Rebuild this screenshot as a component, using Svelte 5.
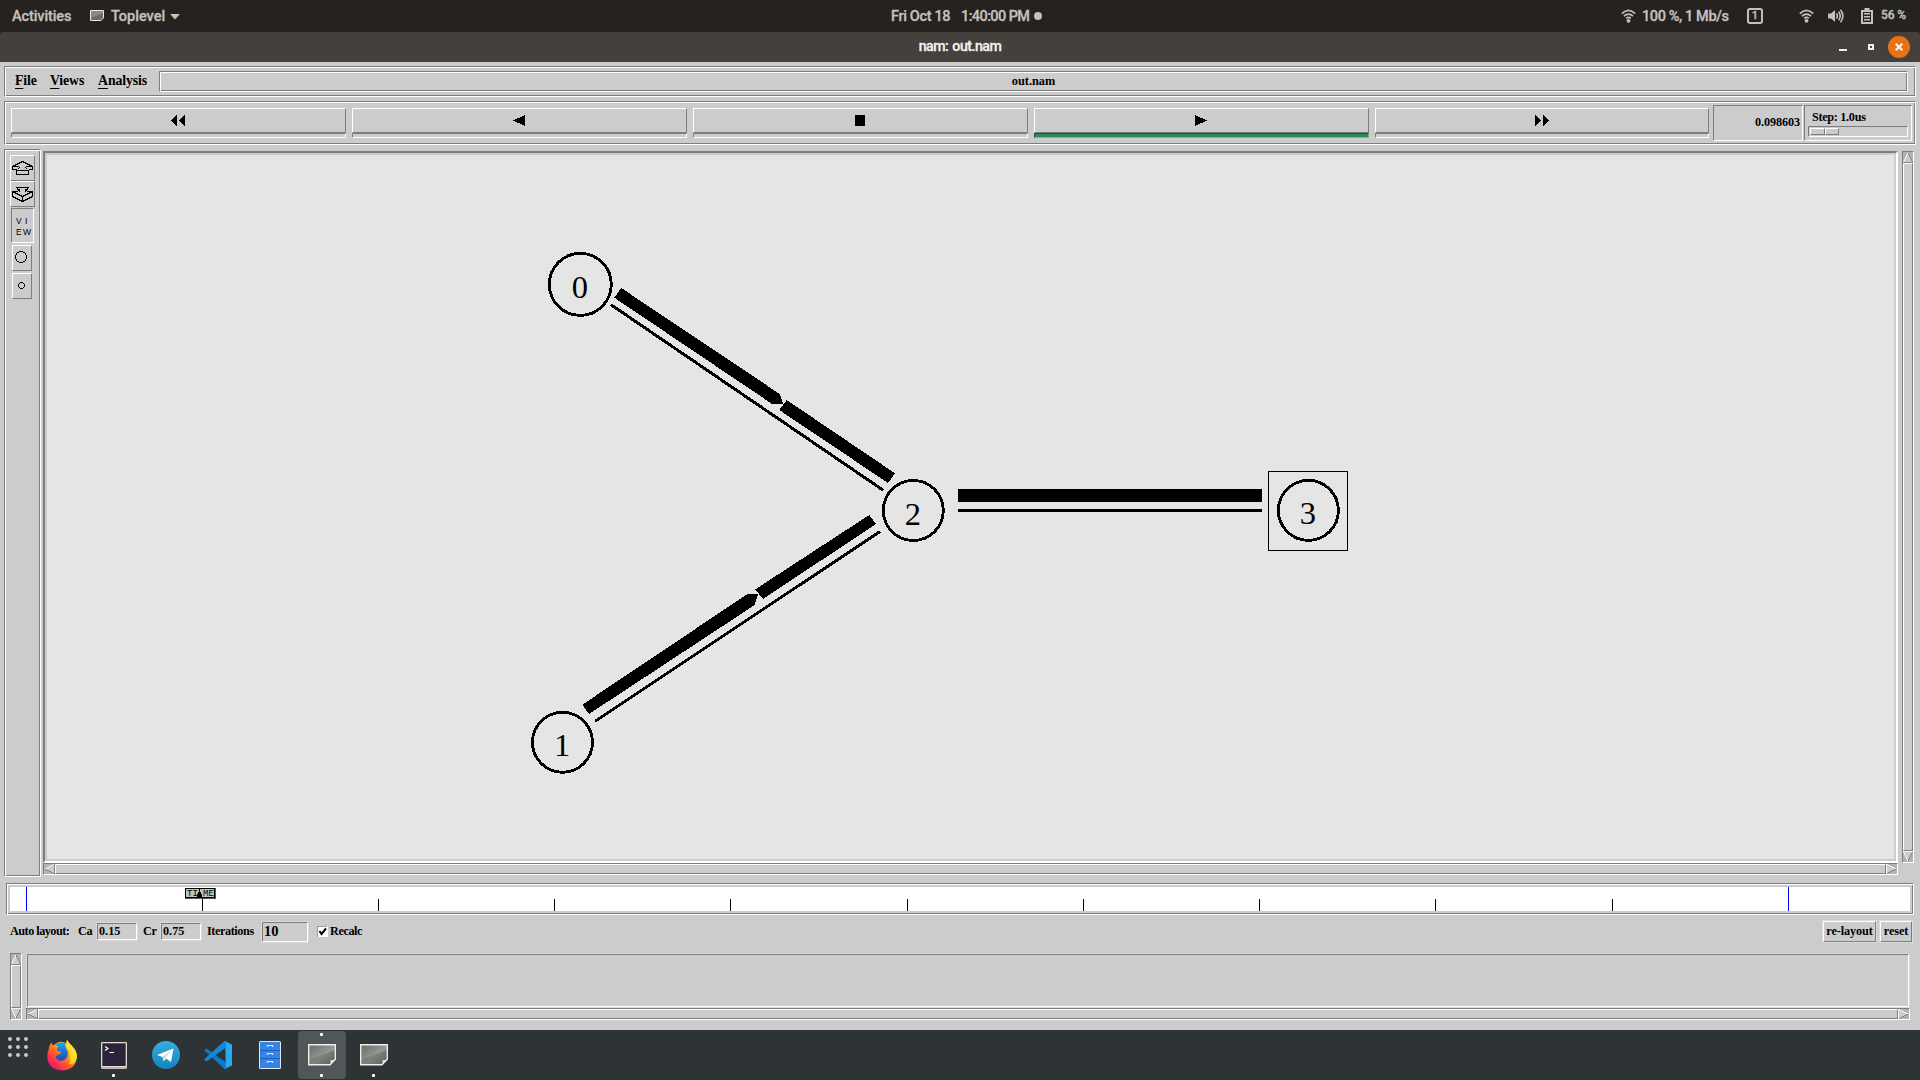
<script>
  const playback = ['rewind', 'back', 'stop', 'play', 'forward'];
  const glyphs = {
    rewind: 'M6 0v11L0 5.5zM14 0v11L8 5.5z',
    back: 'M13 0v11L1 5.5z',
    stop: 'M2 0h10v11H2z',
    play: 'M1 0v11L13 5.5z',
    forward: 'M0 0v11L6 5.5zM8 0v11l6-5.5z'
  };
  const nodes = [
    { id: 0, x: 580.3, y: 284.4, r: 31 },
    { id: 1, x: 562.5, y: 742.3, r: 30 },
    { id: 2, x: 913.3, y: 510.5, r: 30 },
    { id: 3, x: 1308.4, y: 510.4, r: 30 }
  ];
  const packets = [
    '621.3,288 614.3,297.7 771.7,403.7 783.2,403.7 779.7,394',
    '786.7,400 779.3,410 888,483 895,473.3',
    '582.3,704.7 589,714 754.7,605 758.2,594.2 747.5,594',
    '755.3,589.3 763,599 876,524 869.3,515',
    '958,489 1262,489 1262,502 958,502'
  ];
  const wires = [
    [610.8, 304.6, 883.2, 490.2],
    [595.2, 721.2, 880, 531.4],
    [958, 510.5, 1262, 510.5]
  ];
  const ticks = [1, 2, 3, 4, 5, 6, 7, 8, 9].map((k) => Math.floor(16 + 176.23 * k));
</script>

{#snippet arrow(dir)}
  <svg class="arrow" width="11" height="11" viewBox="0 0 11 11" shape-rendering="crispEdges">
    <rect width="11" height="11" fill="#b3b3b3" />
    {#if dir === 'up'}
      <path d="M5.5 .5L.5 10.5H10.5z" fill="#ccc" /><path d="M.5 10.5L5.5 .5" stroke="#fff" /><path d="M5.5 .5L10.5 10.5H.5" fill="none" stroke="#7d7d7d" />
    {:else if dir === 'down'}
      <path d="M.5 .5H10.5L5.5 10.5z" fill="#ccc" /><path d="M5.5 10.5L.5 .5H10.5" fill="none" stroke="#fff" /><path d="M10.5 .5L5.5 10.5" stroke="#7d7d7d" />
    {:else if dir === 'left'}
      <path d="M10.5 .5L.5 5.5L10.5 10.5z" fill="#ccc" /><path d="M.5 5.5L10.5 .5" stroke="#fff" /><path d="M10.5 .5V10.5L.5 5.5" fill="none" stroke="#7d7d7d" />
    {:else}
      <path d="M.5 .5V10.5L10.5 5.5z" fill="#ccc" /><path d="M.5 10.5V.5L10.5 5.5" fill="none" stroke="#fff" /><path d="M10.5 5.5L.5 10.5" stroke="#7d7d7d" />
    {/if}
  </svg>
{/snippet}

{#snippet wifi()}
  <svg width="15" height="14" viewBox="0 0 15 14" fill="none" stroke="#c2c1bf" stroke-width="1.7">
    <path d="M.8 4.7Q7.5-1.8 14.2 4.7M3 7.2q4.5-4.3 9 0M5.2 9.4q2.3-2.1 4.6 0" /><circle cx="7.5" cy="11.8" r="1.9" fill="#c2c1bf" stroke="none" />
  </svg>
{/snippet}

{#snippet windowIcon()}
  <svg width="28" height="22" viewBox="0 0 28 22">
    <defs><linearGradient id="sheet" x1="0" y1="0" x2="1" y2="1"><stop offset="0" stop-color="#686a65" /><stop offset=".55" stop-color="#969893" /><stop offset="1" stop-color="#5c5e5a" /></linearGradient></defs>
    <path d="M.7.7H27.3V15.2L22 20.8H.7z" fill="url(#sheet)" stroke="#eeeeec" stroke-width="1.4" />
    <path d="M1.5 16L26.5 6V15L22 20H1.5z" fill="#555753" opacity=".35" />
    <path d="M27.3 15.2q-2.3 1.5-4.8 1 .8 2.4-.5 4.6z" fill="#eeeeec" />
  </svg>
{/snippet}

<div class="screen">
  <header class="topbar">
    <span class="activities">Activities</span>
    <svg class="app-icon" width="14" height="11" viewBox="0 0 14 11"><path d="M.5.5h13V8L11 10.5H.5z" fill="#888a85" stroke="#e8e8e6" /><path d="M1 8l12-5v5l-2 2H1z" fill="#6b6d69" /></svg>
    <span class="app">Toplevel</span>
    <svg class="caret" width="10" height="6" viewBox="0 0 10 6"><path d="M0 0h10L5 5.5z" fill="#c2c1bf" /></svg>
    <div class="clock"><span class="date">Fri Oct 18</span><span class="time">1:40:00 PM</span><i></i></div>
    <div class="status">
      {@render wifi()}
      <span class="net">100 %, 1 Mb/s</span>
      <span class="workspace">1</span>
      {@render wifi()}
      <svg class="volume" width="16" height="14" viewBox="0 0 16 14" fill="none" stroke="#c2c1bf" stroke-width="1.6"><path d="M0 4.5h3L7 1v12L3 9.500H0z" fill="#c2c1bf" stroke="none" /><path d="M8.500 4.500q1.700 2.500 0 5M10.600 2.700q3.200 4.300 0 8.600M12.500 .8q4.800 6.200 0 12.400" /></svg>
      <svg class="battery" width="12" height="16" viewBox="0 0 12 16"><path d="M3.500 0h5v2H12v14H0V2h3.500z" fill="#c2c1bf" /><path d="M2 4h8v10H2z" fill="#262220" /><path d="M3 5h6v1.600H3zM3 8h6v1.600H3zM3 11h6v1.600H3z" fill="#c2c1bf" /></svg>
      <span class="percent">56 %</span>
    </div>
  </header>
  <div class="titlebar">
    <span class="spacer"></span>
    <span class="title">nam: out.nam</span>
    <div class="controls">
      <svg width="8" height="2"><rect width="8" height="2" fill="#f2f1f0" /></svg>
      <svg width="6" height="6"><path d="M0 0h6v6H0zM2 2v2h2V2z" fill="#f2f1f0" fill-rule="evenodd" /></svg>
      <svg width="22" height="22"><circle cx="11" cy="11" r="11" fill="#e97313" /><path d="M7.700 7.700l6.600 6.600m0-6.600l-6.600 6.600" stroke="#f5f0ec" stroke-width="2.300" /></svg>
    </div>
  </div>

  <main class="window">
    <nav class="menubar groove">
      <span class="file"><u>F</u>ile</span><span class="views"><u>V</u>iews</span><span class="analysis"><u>A</u>nalysis</span>
      <div class="filename groove">out.nam</div>
    </nav>
    <section class="toolbar groove">
      {#each playback as name}
        <div class="play" class:running={name === 'play'}>
          <button aria-label={name}><svg width="14" height="11" shape-rendering="crispEdges"><path d={glyphs[name]} /></svg></button>
          <div class="strip"></div>
        </div>
      {/each}
      <div class="now sunken">0.098603</div>
      <div class="step sunken">
        <span>Step: 1.0us</span>
        <div class="slider"><div class="knob"><i></i><i></i></div></div>
      </div>
    </section>

    <section class="work">
      <aside class="side groove">
        <div class="tool"><svg width="21" height="14" viewBox="0 0 21 14" shape-rendering="crispEdges" fill="none" stroke="#000"><path d="M4.500 8.500H.5V5.500L10.500 .5L20.500 5.500V8.500H16.500M.5 5.500H6.500M20.500 5.500H14.500M6.500 5.500L7.500 6.500L5.500 8.500M14.500 5.500L13.500 6.500L15.500 8.500M4.500 9.500H16.500V13.500H4.500z" /></svg></div>
        <div class="tool"><svg width="21" height="15" viewBox="0 0 21 15" shape-rendering="crispEdges" fill="none" stroke="#000"><path d="M4.500 .5H16.500L14.500 3.500L15.500 4.500H20.500L10.500 9.500L.5 4.500H5.500L6.500 3.500zM.5 4.500V9.500L10.500 14.500L20.500 9.500V4.500M10.500 9.500V14.500M5.500 2.500H7.500V4.500M15.500 2.500H13.500V4.500" /></svg></div>
        <div class="tool view sunken">
          <svg width="17" height="20"><text class="pixel" x="0" y="7">V</text><text class="pixel" x="9" y="7">I</text><text class="pixel" x="0" y="18">E</text><text class="pixel" x="7" y="18">W</text></svg>
        </div>
        <div class="tool round"><svg width="12" height="12" shape-rendering="crispEdges"><circle cx="6" cy="6" r="5.500" fill="none" stroke="#000" /></svg></div>
        <div class="tool round small"><svg width="7" height="7" shape-rendering="crispEdges"><path d="M2 .5H5M2 6.500H5M.5 2V5M6.500 2V5M1 1.500H2M5 1.500H6M1 5.500H2M5 5.500H6" stroke="#000" /></svg></div>
      </aside>
      <div class="stage">
        <div class="canvas">
          <svg width="1847" height="704" viewBox="47 155 1847 704">
            <g shape-rendering="crispEdges">
              {#each packets as points}<polygon {points} />{/each}
              {#each wires as [x1, y1, x2, y2]}<line {x1} {y1} {x2} {y2} stroke="#000" stroke-width="3" />{/each}
              {#each nodes as n}<circle cx={n.x} cy={n.y} r={n.r} fill="none" stroke="#000" stroke-width="2.900" />{/each}
              <rect x="1268.500" y="471.500" width="79" height="79" fill="none" stroke="#000" />
            </g>
            {#each nodes as n}<text class="node" x={n.x - 0.5} y={n.y + 14}>{n.id}</text>{/each}
          </svg>
        </div>
        <div class="hbar">{@render arrow('left')}<div class="thumb"></div>{@render arrow('right')}</div>
      </div>
      <div class="vbar">{@render arrow('up')}<div class="thumb"></div>{@render arrow('down')}</div>
    </section>

    <section class="timeline groove">
      <svg width="1900" height="24">
        <g shape-rendering="crispEdges">
          <rect width="1900" height="24" fill="#fff" />
          <path d="M16.500 0V24M1778.500 0V24" stroke="#00f" />
          {#each ticks as x}<rect {x} y="12" width="1" height="12" />{/each}
          <rect x="175" y="1" width="31" height="11" fill="#555" />
          <rect x="175.500" y="1.500" width="29" height="9" fill="#bfc2b8" stroke="#000" />
          <path d="M189 2h1v3h1v2h1v4h-5V7h1V5h1z" />
        </g>
        <text class="marker" x="177" y="9.200">TI</text><text class="marker" x="193" y="9.200">ME</text>
      </svg>
    </section>

    <section class="layout">
      <span class="label auto">Auto layout:</span><span class="label ca">Ca</span><div class="entry">0.15</div>
      <span class="label cr">Cr</span><div class="entry">0.75</div>
      <span class="label iter">Iterations</span><div class="entry big">10</div>
      <svg class="check" width="11" height="11"><rect width="11" height="11" fill="#fff" /><path d="M0 11V0h10" fill="none" stroke="#7d7d7d" stroke-width="1.500" /><path d="M2.500 5l2 3L9 2.500" fill="none" stroke="#000" stroke-width="2" /></svg>
      <span class="label recalc">Recalc</span>
      <span class="grow"></span>
      <button class="relayout">re-layout</button><button class="reset">reset</button>
    </section>

    <section class="log">
      <div class="vbar">{@render arrow('up')}<div class="thumb"></div>{@render arrow('down')}</div>
      <div class="log-main">
        <div class="log-text"></div>
        <div class="hbar">{@render arrow('left')}<div class="thumb"></div>{@render arrow('right')}</div>
      </div>
    </section>
  </main>

  <footer class="dock">
    <svg class="apps" width="20" height="20" fill="#c6c8c8">
      {#each [2, 10, 18] as y}{#each [2, 10, 18] as x}<circle cx={x} cy={y} r="2" />{/each}{/each}
    </svg>
    <div class="launcher first">
      <svg width="30" height="31" viewBox="0 0 30 31">
        <defs>
          <linearGradient id="fox" x1=".9" y1=".1" x2=".2" y2=".9"><stop offset="0" stop-color="#fff13d" /><stop offset=".35" stop-color="#ffb41c" /><stop offset=".65" stop-color="#ff5a2b" /><stop offset="1" stop-color="#f5156c" /></linearGradient>
          <linearGradient id="globe" x1="0" y1="0" x2="0" y2="1"><stop offset="0" stop-color="#12a5f4" /><stop offset="1" stop-color="#2746b8" /></linearGradient>
        </defs>
        <path d="M1.500 10Q2 5 4.500 2.500Q5 4.500 6.500 5.500Q13-1 20 4Q19 2 20 0Q22 3.500 25 6Q30 11 30 17Q28.500 30 15 30.500Q1 29.500 .3 17Q.3 12.500 1.500 10z" fill="url(#fox)" />
        <path d="M8 5Q13 .5 18.500 3.500Q17.500 6 19.500 9Q22 13 20 17Q16.500 22.500 11 20Q7.500 17.500 9.500 15.500Q12.500 15 14.500 12L10.500 11Q9 8.500 11.500 6.500Q10 5 8 5z" fill="url(#globe)" />
        <path d="M20 0Q22 3.500 25 6Q30 11 30 17Q28 25 22 24Q25 17 22.500 11Q17.500 5 20 0z" fill="#ffe52e" opacity=".8" />
      </svg>
    </div>
    <div class="launcher">
      <svg width="26" height="27"><rect width="26" height="27" rx="1.500" fill="#bdb8b0" /><rect y="0" width="26" height="25" rx="1.500" fill="#dedbd6" /><rect x="1.300" y="1.300" width="23.400" height="22.700" fill="#2b2438" /><path d="M4 4.500l3 2-3 2M8.500 10.500H13" fill="none" stroke="#fff" stroke-width="1.200" /></svg><i class="dot"></i>
    </div>
    <div class="launcher">
      <svg width="28" height="28"><defs><linearGradient id="tg" x1="0" y1="0" x2="0" y2="1"><stop offset="0" stop-color="#37aee2" /><stop offset="1" stop-color="#1482bd" /></linearGradient></defs><circle cx="14" cy="14" r="14" fill="url(#tg)" /><path d="M5 14L21.500 7.500L19 21L14 17.500L11.500 20.500L10.500 16z" fill="#fff" /><path d="M10.500 16L20 9l-7.500 8.200-1 3.300z" fill="#bcd5e5" /></svg>
    </div>
    <div class="launcher">
      <svg width="28" height="28"><path d="M0 9L2.500 7.500L21.500 21V28L20.500 28z" fill="#0b7cc4" /><path d="M0 18.500L2.500 20.500L21.500 7V0H20.500z" fill="#0f88d5" /><path d="M20.500 0L28 3.500V24.500L20.500 28L21.500 26V2z" fill="#29a9f1" /></svg>
    </div>
    <div class="launcher">
      <svg width="22" height="28"><rect width="22" height="28" rx="1.500" fill="#dbe9fa" /><rect x="1" y="1" width="20" height="26" fill="#3584e4" /><path d="M1 9.500H21M1 17.500H21" stroke="#1c62bd" /><path d="M8.500 6V4.500h5V6M8.500 14v-1.500h5V14M8.500 22v-1.500h5V22" fill="none" stroke="#e0e4e8" stroke-width="1.200" /></svg>
    </div>
    <div class="launcher active"><i class="dot top"></i>{@render windowIcon()}<i class="dot"></i></div>
    <div class="launcher">{@render windowIcon()}<i class="dot"></i></div>
  </footer>
</div>

<style>
  :global(body) { margin: 0; overflow: hidden; }
  * { box-sizing: border-box; }
  svg { display: block; flex: none; }
  .screen { width: 1920px; height: 1080px; display: flex; flex-direction: column; background: #262220; font-family: Roboto, 'Open Sans', sans-serif; font-weight: 500; white-space: nowrap; }
  .topbar, .title { -webkit-text-stroke: .3px; }
  .topbar { height: 32px; flex: none; display: flex; align-items: center; padding-left: 12px; color: #c2c1bf; font-size: 14.500px; }
  .activities { width: 78px; letter-spacing: -.1px; }
  .app { margin-left: 7px; width: 59px; }
  .app-icon { margin-top: -1px; }
  .caret { margin-top: 1px; }
  .clock { margin-left: 711px; display: flex; align-items: center; }
  .date { width: 70px; letter-spacing: -.35px; }
  .time { width: 73px; letter-spacing: -.6px; }
  .clock i { width: 8px; height: 8px; border-radius: 50%; background: #c2c1bf; }
  .status { margin-left: auto; display: flex; align-items: center; width: 299px; }
  .net { width: 105px; margin-left: 6px; letter-spacing: -.4px; }
  .workspace { width: 16px; height: 16px; border: 2px solid #c2c1bf; border-radius: 3px; font-size: 11px; line-height: 12px; text-align: center; margin-right: 36px; }
  .volume { margin-left: 14px; }
  .battery { margin-left: 17px; }
  .percent { font-size: 12px; margin: -2px 0 0 8px; letter-spacing: -.1px; }

  .titlebar { height: 30px; flex: none; display: flex; align-items: center; background: #45403c; border-radius: 4px 4px 0 0; color: #f2f1f0; font-size: 14.200px; }
  .spacer, .controls { flex: 1; }
  .title { padding-bottom: 2px; letter-spacing: -.5px; word-spacing: 1px; }
  .controls { display: flex; justify-content: flex-end; align-items: center; }
  .controls svg:nth-child(1) { margin: 6px 21px 0 0; }
  .controls svg:nth-child(2) { margin-right: 14px; }
  .controls svg:nth-child(3) { margin-right: 10px; }

  .window { height: 968px; flex: none; background: #ccc; padding: 4px 0 0 4px; font-family: 'Liberation Serif', serif; font-weight: 700; color: #000; font-size: 12.200px; }
  .groove { border: 1px solid; border-color: #7d7d7d #fff #fff #7d7d7d; box-shadow: inset 1px 1px #fff, inset -1px -1px #7d7d7d; }
  .sunken { border: 1px solid; border-color: #7d7d7d #fff #fff #7d7d7d; }
  .menubar { width: 1912px; height: 31px; display: flex; align-items: center; padding-left: 10px; font-size: 13.800px; }
  .menubar u { text-underline-offset: 3px; text-decoration-thickness: 1px; }
  .menubar > span { padding-bottom: 2px; letter-spacing: -.1px; }
  .file { width: 35px; }
  .views { width: 48px; }
  .analysis { width: 61px; }
  .filename { width: 1749px; height: 21px; text-align: center; font-size: 12.300px; line-height: 19px; }
  .toolbar { width: 1912px; height: 44px; margin-top: 4px; padding: 3px 0 0 6px; display: flex; }
  .play { width: 335px; margin: 3px 6px 0 0; }
  .play:nth-child(5) { width: 334px; margin-right: 4px; }
  button { background: #ccc; border: 1px solid; border-color: #fff #7d7d7d #7d7d7d #fff; padding: 0; font: inherit; color: inherit; }
  .play button { display: flex; justify-content: center; width: 100%; height: 25px; padding: 6px 1px 0 0; }
  .strip { height: 5px; border: 1px solid; border-color: #7d7d7d #fff #fff #7d7d7d; }
  .running .strip { background: #2e8b57; border-color: #1b5334 #6fbf92 #6fbf92 #1b5334; }
  .now { width: 90px; height: 36px; text-align: right; line-height: 33px; padding-right: 2px; margin-right: 1px; letter-spacing: -.1px; }
  .step { width: 108px; height: 36px; padding: 4px 0 0 3px; }
  .step span { display: block; height: 16px; line-height: 15px; padding-left: 4px; letter-spacing: -.3px; }
  .slider { width: 100px; height: 11px; border: 1px solid; border-color: #7d7d7d #fff #fff #7d7d7d; padding: 1px; }
  .knob { width: 29px; height: 7px; display: flex; }
  .knob i { flex: 1; border: 1px solid; border-color: #fff #7d7d7d #7d7d7d #fff; }

  .work { display: flex; margin-top: 4px; }
  .side { width: 37px; height: 728px; padding: 5px 0 0 5px; }
  .tool { width: 25px; height: 26px; border: 1px solid; border-color: #fff #7d7d7d #7d7d7d #fff; display: flex; align-items: center; justify-content: center; }
  .view { width: 23px; height: 35px; margin: 1px 0 2px 1px; border-color: #7d7d7d #fff #fff #7d7d7d; padding: 2px 0 0 4px; }
  .pixel { font: 400 8.500px 'Liberation Sans', sans-serif; -webkit-text-stroke: .2px; }
  .round { width: 20px; margin: 0 0 2px 2px; padding: 0 3px 2px 0; }
  .small { padding: 0 1px 1px 0; }
  .stage { margin: 2px 0 0 2px; width: 1855px; }
  .canvas { height: 712px; border: 2px solid; border-color: #7d7d7d #fff #fff #7d7d7d; padding: 2px; background: #e5e5e5; box-shadow: inset 0 0 0 2px #ccc; }
  .node { font: 400 32.500px 'Liberation Serif', serif; text-anchor: middle; }
  .hbar, .vbar { display: flex; border: 1px solid; border-color: #7d7d7d #fff #fff #7d7d7d; background: #b3b3b3; }
  .hbar { height: 12px; }
  .hbar .arrow { height: 10px; }
  .vbar { flex-direction: column; width: 12px; }
  .vbar .arrow { width: 10px; }
  .thumb { flex: 1; background: #ccc; border: 1px solid; border-color: #fff #7d7d7d #7d7d7d #fff; }
  .work > .vbar { height: 712px; margin: 2px 0 0 4px; }
  .timeline { width: 1908px; height: 32px; margin: 6px 0 0 2px; padding: 3px; }
  .marker { font: 400 9px 'Liberation Mono', monospace; }

  .layout { display: flex; height: 32px; align-items: center; padding: 1px 8px 0 6px; }
  .label { flex: none; padding-bottom: 1px; letter-spacing: -.4px; }
  .auto { width: 68px; letter-spacing: -.5px; }
  .ca { width: 19px; }
  .cr { width: 18px; margin-left: 6px; }
  .iter { width: 55px; margin-left: 6px; }
  .entry { width: 40px; height: 17px; border: 1px solid; border-color: #7d7d7d #fff #fff #7d7d7d; outline: 1px solid #dadada; padding-left: 1px; line-height: 15px; }
  .entry.big { width: 46px; height: 20px; font-size: 14.500px; line-height: 17px; }
  .check { margin-left: 9px; }
  .recalc { margin-left: 2px; }
  .grow { flex: 1; }
  .layout button { height: 21px; outline: 1px solid #dcdcdc; padding-bottom: 1px; letter-spacing: -.1px; }
  .relayout { width: 53px; margin-right: 4px; }
  .reset { width: 32px; }
  .log { display: flex; margin: 6px 0 0 6px; height: 67px; }
  .log-main { width: 1884px; margin-left: 4px; }
  .log-text { height: 53px; margin: 1px 1px; border: 1px solid; border-color: #7d7d7d #fff #fff #7d7d7d; outline: 1px solid #d9d9d9; }

  .dock { height: 50px; flex: none; background: #2e3336; display: flex; align-items: center; padding-left: 8px; }
  .apps { margin: -16px 8px 0 0; }
  .launcher { position: relative; width: 48px; height: 48px; margin-right: 4px; display: flex; align-items: center; justify-content: center; border-radius: 4px; }
  .first { margin-left: 2px; }
  .active { background: #515759; }
  .dot { position: absolute; bottom: 2px; left: 22px; width: 3px; height: 3px; border-radius: 1px; background: #fff; }
  .dot.top { bottom: auto; top: 2px; }
</style>
